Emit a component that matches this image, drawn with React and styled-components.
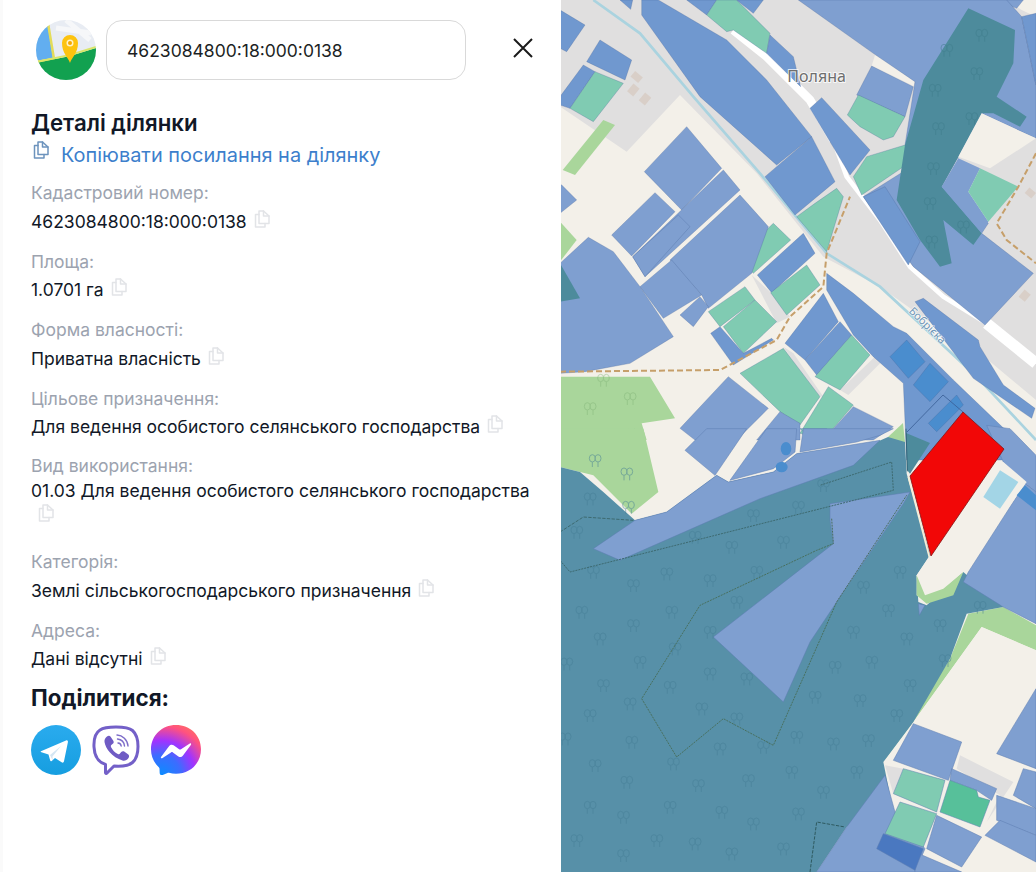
import React from 'react';
import styled, { createGlobalStyle } from 'styled-components';

const GlobalStyle = createGlobalStyle`
  html, body {
    margin: 0;
    padding: 0;
    background: #fff;
    font-family: Inter, "Noto Sans", sans-serif;
  }
`;

const Page = styled.div`
  display: flex;
  width: 1036px;
  height: 872px;
  overflow: hidden;
`;

const Panel = styled.aside`
  width: 561px;
  flex-shrink: 0;
  box-sizing: border-box;
  padding: 20px 27px 0 28px;
  border-left: 3px solid #fafafa;
`;

const Header = styled.div`
  display: flex;
  align-items: center;
  margin-bottom: 29px;
`;

const LogoWrap = styled.div`
  width: 60px;
  height: 60px;
  margin: 0 10px 0 5px;
  flex-shrink: 0;
`;

const SearchBox = styled.div`
  width: 360px;
  height: 60px;
  box-sizing: border-box;
  display: flex;
  align-items: center;
  padding-left: 20px;
  border: 1px solid #d9d9d9;
  border-radius: 16px;
  font-size: 17.5px;
  color: #1c1f24;
`;

const CloseButton = styled.button`
  margin: 0 0 4px 46px;
  padding: 0;
  width: 22px;
  height: 22px;
  border: none;
  background: none;
  color: #1a1a1a;
  display: flex;
`;

const Title = styled.h2`
  margin: 0;
  font-size: 22.25px;
  line-height: 28px;
  font-weight: 600;
  color: #111827;
`;

const CopyLink = styled.div`
  display: flex;
  align-items: flex-start;
  height: 33px;
  margin-top: 3px;
  margin-bottom: 6px;
  font-size: 19.95px;
  line-height: 30px;
  color: #3d7fcc;
`;

const LinkIcon = styled.span`
  width: 30px;
  color: #6c93bd;
  display: block;
  margin: -3px -2px 0 2px;
`;

const Field = styled.div`
  margin-bottom: ${p => (p.$wrapped ? '20px' : '14px')};
`;

const Label = styled.div`
  font-size: 17.5px;
  line-height: ${p => (p.$tight ? '25px' : '27px')};
  color: #9ca3af;
`;

const Value = styled.div`
  font-size: 17.5px;
  line-height: 25px;
  margin-top: ${p => (p.$tight ? '0' : '2.5px')};
  color: #111827;
`;

const CopyMark = styled.span`
  display: inline-block;
  vertical-align: 0;
  margin-left: 7px;
  color: #e2e4e7;
  height: 18px;
  line-height: 0;
`;

const ShareTitle = styled(Title)`
  margin-top: -1px;
  font-size: 22.4px;
  font-weight: 700;
`;

const ShareRow = styled.div`
  display: flex;
  align-items: center;
  gap: 11px;
  margin-top: 13px;
`;

const MapPane = styled.div`
  flex: 1;
  height: 872px;
  background: #f2efe9;
`;

const MapSvg = styled.svg`
  display: block;
  width: 475px;
  height: 872px;
`;

const PlaceName = styled.text`
  font-family: "Noto Sans", sans-serif;
  font-size: 48px;
  fill: #6e6e6e;
  stroke: rgba(255, 255, 255, 0.75);
  stroke-width: 6px;
  paint-order: stroke;
`;

const RiverName = styled.text`
  font-family: "Noto Sans", sans-serif;
  font-size: 33px;
  fill: #6f96b8;
  stroke: rgba(255, 255, 255, 0.7);
  stroke-width: 4px;
  paint-order: stroke;
`;

const BLUE = '#7098cf';
const LIGHT = '#7f9fd0';
const MINT = '#80cbb2';
const TEAL = '#5790a8';
const DEEP = '#4d8b9c';
const GRAY = '#e0dfdf';
const BEIGE = '#f3f0e9';
const GREEN = '#a9d69b';
const WATER = '#4a8dce';

const topShapes = [
  [GRAY, '0,0 1428,0 1428,1200 1260,1060 1100,960 960,860 790,770 590,520 360,285 200,455 0,320'],
  [GRAY, '575,825 635,880 690,950 650,970'],
  [GRAY, '945,1070 965,1085 865,1185 840,1170'],
  [GRAY, '670,1040 700,1060 790,1190 770,1185'],
  [BEIGE, '1340,0 1428,0 1428,50 1385,30'],
  [BEIGE, '945,165 1065,240 1060,262 935,198'],
  [GREEN, '130,360 165,375 45,525 8,510'],
  [GREEN, '0,665 50,720 0,785'],
  [GREEN, '0,1130 270,1130 345,1255 245,1270 260,1320 0,1320'],
];

const topParcels = [
  [BLUE, '0,30 75,75 20,155 0,145'],
  [BLUE, '120,120 215,180 195,240 80,185'],
  [BLUE, '70,195 105,215 30,325 0,315 0,290'],
  [MINT, '105,215 190,250 100,365 30,325'],
  [BLUE, '245,0 295,0 500,120 620,240 755,410 650,495 420,290 245,45'],
  [BLUE, '755,410 825,545 705,645 615,530'],
  [BLUE, '180,0 218,0 212,28'],
  [BLUE, '380,0 470,0 440,45'],
  [MINT, '470,0 530,0 630,100 620,160 520,90 500,95 440,45'],
  [BLUE, '630,105 700,170 722,260 620,160'],
  [BLUE, '530,0 610,0 580,40'],
  [LIGHT, '1310,0 1390,0 1370,25'],
  [LIGHT, '715,0 1340,0 1385,50 1428,255 1428,415 1265,340 1195,470 1145,560 1285,670 1265,700 1420,820 1275,975 1060,800 910,590 1070,490 1035,435 1065,245 940,160'],
  [BLUE, '910,590 975,560 1080,725 1045,795'],
  [BLUE, '1385,50 1428,40 1428,255'],
  [LIGHT, '935,198 1060,260 1035,350 890,285'],
  [MINT, '895,285 1035,350 1000,410 970,420 900,380 862,345'],
  [BLUE, '785,293 930,450 870,525 750,325'],
  [MINT, '1035,435 1060,480 905,585 880,530 920,470'],
  [MINT, '830,565 850,590 800,755 710,650 765,610'],
  [MINT, '640,670 692,720 580,820 535,770'],
  [BLUE, '730,700 765,760 635,878 592,825'],
  [MINT, '740,795 780,855 680,945 632,878'],
  [LIGHT, '380,380 485,505 365,630 253,515'],
  [LIGHT, '490,510 540,570 255,830 218,770'],
  [LIGHT, '285,578 345,635 215,768 155,705'],
  [LIGHT, '355,645 390,680 255,830 218,770'],
  [LIGHT, '540,585 625,680 575,820 445,925 425,885 330,780'],
  [LIGHT, '335,780 425,885 310,955 240,860'],
  [LIGHT, '420,890 445,920 400,980 360,945'],
  [LIGHT, '85,712 160,755 240,860 340,1010 210,1090 75,1115 0,1120 0,790'],
  [LIGHT, '0,550 50,600 0,640'],
  [MINT, '555,860 585,900 480,980 445,935'],
  [MINT, '585,900 650,965 550,1060 490,980'],
  [BLUE, '480,980 550,1060 635,1015 640,1020 520,1095 452,1000'],
  [BLUE, '790,880 835,965 735,1080 675,1030'],
  [BLUE, '840,965 875,1005 770,1125 735,1080'],
  [BLUE, '800,820 880,880 1000,980 1040,1000 1180,1140 1430,1380 1040,1380 1030,1150 940,1070 880,1005 800,870'],
  [MINT, '875,1005 930,1065 840,1170 765,1130'],
  [MINT, '670,1045 780,1190 720,1275 660,1235 540,1120'],
  [MINT, '805,1160 880,1215 790,1320 720,1300'],
  [LIGHT, '505,1130 625,1225 530,1320 405,1320 360,1285'],
  [LIGHT, '880,1220 1000,1280 940,1320 790,1320'],
  [LIGHT, '660,1235 720,1270 720,1320 590,1320'],
  [BLUE, '1065,905 1090,895 1255,1020 1260,1040 1330,1155 1425,1225 1415,1255 1240,1135'],
  [WATER, '1040,1020 1095,1085 1045,1135 990,1070'],
  [WATER, '1110,1090 1165,1145 1110,1205 1060,1155'],
  [WATER, '1190,1185 1210,1215 1130,1295 1105,1270'],
];

const topForest = '1225,25 1365,90 1360,190 1310,290 1400,350 1380,380 1300,340 1265,340 1195,470 1145,560 1265,700 1240,735 1150,660 1175,790 1140,800 1080,720 1010,600 1035,435 1090,240';

const topCovers = [
  [BEIGE, '1265,340 1428,415 1290,505 1195,470'],
  [LIGHT, '1195,475 1260,505 1225,575 1285,665 1265,700 1145,560'],
  [MINT, '1260,505 1375,560 1285,665 1225,575'],
  [DEEP, '0,790 60,895 0,905'],
];

const lowShapes = [
  [GREEN, '0,-10 250,-10 295,180 215,245 100,130 0,105'],
  [GREEN, '1225,545 1330,525 1428,580 1428,655 1265,585 1060,870 970,990 1170,680'],
  [BEIGE, '1265,585 1428,655 1428,1320 980,1320 970,990 1060,870'],
  [GRAY, '1200,970 1360,1050 1280,1170 1320,1090 1190,1010'],
  [GRAY, '975,1000 1030,1010 1000,1085'],
];

const lowParcels = [
  [LIGHT, '375,55 440,-10 560,-10 465,130'],
  [LIGHT, '510,145 620,-10 710,-10 705,60 640,110'],
  [MINT, '720,-10 800,-10 770,30'],
  [LIGHT, '720,60 730,-10 1000,-10 960,10 890,30'],
  [GREEN, '984,15 1029,-27 1035,30 1000,40'],
  [TEAL, '0,105 60,120 130,180 225,265 320,240 470,130 505,150 640,120 710,65 950,30 984,15 1035,30 1040,125 1110,370 1070,430 1075,510 1100,520 1210,420 1330,525 1220,545 1170,680 1060,870 970,990 990,1090 860,1185 770,1320 0,1320'],
  [LIGHT, '225,265 320,240 470,130 505,150 640,120 710,65 960,25 880,100 600,200 180,385 100,350'],
  [LIGHT, '810,215 1050,180 1030,215 830,510 750,630 670,810 460,615 820,335 810,265'],
  [DEEP, '1038,3 1110,33 1050,125 1041,114'],
  [LIGHT, '1280,-20 1350,-10 1428,70 1428,180 1395,155 1330,90'],
  [LIGHT, '1395,155 1428,180 1428,575 1330,525 1210,450 1225,420'],
  [BEIGE, '1330,90 1400,150 1210,420 1100,515 1070,490 1070,430 1110,370'],
  [GREEN, '1210,420 1180,490 1100,515 1070,490 1070,430 1095,490 1150,470'],
  [LIGHT, '1075,515 1095,520 1078,550'],
  [LIGHT, '1428,770 1428,1010 1310,965'],
  [LIGHT, '1060,875 1205,930 1165,1045 1000,985'],
  [LIGHT, '770,1320 860,1185 975,1030 1005,1140 1095,1250 1065,1320'],
  [LIGHT, '1175,1010 1310,1070 1295,1105 1250,1075 1170,1045'],
  [LIGHT, '1390,1010 1428,1020 1428,1130 1360,1090'],
  [LIGHT, '1310,1090 1428,1130 1428,1210 1310,1165'],
  [LIGHT, '1320,1165 1428,1210 1428,1290 1275,1210'],
  [LIGHT, '1130,1150 1265,1215 1205,1305 1100,1250'],
  [LIGHT, '1065,1260 1205,1320 1065,1320'],
  [MINT, '1030,1010 1155,1045 1130,1140 1000,1085'],
  [MINT, '1020,1110 1130,1145 1090,1245 975,1205'],
  ['#57c09a', '1170,1045 1250,1075 1255,1095 1290,1105 1260,1185 1140,1140'],
  ['#4a78c0', '970,1205 1090,1250 1065,1315 950,1250'],
];

const lowTrees = [
  [105, 85], [200, 125], [90, 200], [205, 225], [50, 300], [100, 420], [220, 460], [320, 425], [405, 315], [515, 345], [580, 250], [670, 330], [715, 225], [790, 160], [590, 420], [450, 445], [530, 510], [335, 540], [65, 540], [220, 580], [120, 620], [345, 650], [240, 690], [20, 695], [130, 760], [330, 765], [450, 725], [560, 740], [825, 705], [935, 690], [1050, 760], [765, 795], [900, 805], [1010, 850], [425, 830], [530, 860], [210, 815], [90, 850], [480, 950], [610, 945], [710, 915], [820, 935], [925, 925], [215, 930], [15, 920], [105, 1000], [340, 995], [200, 1050], [415, 1060], [565, 1045], [695, 1020], [790, 1080], [890, 1020], [90, 1125], [330, 1125], [190, 1155], [485, 1140], [715, 1145], [580, 1175], [50, 1225], [290, 1225], [405, 1235], [190, 1270], [515, 1265], [670, 1250], [985, 535], [880, 600], [1040, 620], [1140, 580], [1020, 420], [910, 465], [1260, 525], [1155, 685], [450, 600],
];

const topTrees = [
  [1265, 105, 'd'], [1160, 150, 'd'], [1250, 220, 'd'], [1125, 270, 'd'], [1235, 355, 'd'], [1135, 385, 'd'], [1120, 505, 'd'], [1110, 610, 'd'], [1210, 680, 'd'], [1115, 725, 'd'], [130, 1140, 'g'], [210, 1195, 'g'], [90, 1225, 'g'], [215, 1305, 'g'],
];

const Tree = ({ x, y, color }) => (
  <g transform={`translate(${x - 18} ${y - 18})`} fill="none" stroke={color} strokeWidth="3" opacity="0.5">
    <ellipse cx="10" cy="12" rx="9" ry="11" />
    <ellipse cx="27" cy="12" rx="9" ry="11" />
    <path d="M10 23v15M27 23v15" />
  </g>
);

const Shape = ({ fill, points, edge = '#3f5f96' }) => (
  <polygon points={points} fill={fill} stroke={edge} strokeWidth="2" strokeOpacity="0.4" />
);

function ParcelMap() {
  return (
    <MapSvg viewBox="3 0 1425 2616" aria-label="Карта">
      <rect x="0" y="0" width="1428" height="2616" fill={BEIGE} />
      {topShapes.map(([c, p]) => <polygon key={p} points={p} fill={c} />)}
      <rect x="215" y="220" width="30" height="22" transform="rotate(40 230 231)" fill="#d9cfc8" />
      <rect x="205" y="258" width="30" height="24" transform="rotate(-50 220 270)" fill="#d9cfc8" />
      <rect x="240" y="285" width="30" height="24" transform="rotate(-50 255 297)" fill="#d9cfc8" />
      <rect x="1380" y="875" width="28" height="24" transform="rotate(-50 1394 887)" fill="#d9cfc8" />
      <rect x="1398" y="568" width="26" height="22" transform="rotate(40 1411 579)" fill="#d9cfc8" />
      <polyline points="100,0 240,100 400,290 600,520 800,760 960,860 1100,990 1250,1130 1428,1320" fill="none" stroke="#aad3df" strokeWidth="8" />
      <polyline points="520,90 620,170 750,300 820,420" fill="none" stroke="#fff" strokeWidth="26" />
      <polyline points="820,420 860,530 960,660 1050,800 1150,890 1280,970" fill="none" stroke="#fff" strokeWidth="14" />
      <polyline points="1280,970 1428,1090" fill="none" stroke="#fff" strokeWidth="34" />
      {topParcels.map(([c, p]) => <Shape key={p} fill={c} points={p} />)}
      <polygon points={topForest} fill={DEEP} />
      {topCovers.map(([c, p]) => <polygon key={p} points={p} fill={c} />)}
      <polyline points="0,1115 480,1110 650,1020 690,950 790,860 800,760 870,590" fill="none" stroke="#c69f6a" strokeWidth="6" strokeDasharray="18 9" />
      <polyline points="1428,460 1375,560 1310,670 1340,720 1428,790" fill="none" stroke="#c69f6a" strokeWidth="6" strokeDasharray="18 9" />
      {topTrees.map(([x, y, k]) => <Tree key={`${x}-${y}`} x={x} y={y} color={k === 'd' ? '#3f7d8c' : '#86b87c'} />)}
      <PlaceName x="682" y="245">Поляна</PlaceName>
      <RiverName transform="translate(1045 935) rotate(45)">Бобрієка</RiverName>

      <g transform="translate(0 1296)">
        {lowShapes.map(([c, p]) => <polygon key={p} points={p} fill={c} />)}
        {lowParcels.map(([c, p]) => (
          <polygon key={p} points={p} fill={c} stroke={c === TEAL || c === BEIGE || c === GREEN || c === DEEP ? 'none' : '#5c7cb0'} strokeWidth="1.5" />
        ))}
        <polygon points="1320,115 1375,150 1320,230 1270,195" fill="#a3d5e6" />
        <polygon points="1370,190 1395,160 1428,190 1428,235" fill={WATER} />
        <ellipse cx="678" cy="50" rx="16" ry="20" fill={WATER} />
        <ellipse cx="665" cy="105" rx="18" ry="16" fill={WATER} />
        {lowTrees.map(([x, y]) => <Tree key={`${x}-${y}`} x={x} y={y} color="#467f97" />)}
        <polyline points="0,300 70,255 220,265" fill="none" stroke="#3d6a70" strokeWidth="3" strokeDasharray="10 4" />
        <polyline points="0,385 30,420 1000,175 995,90 780,160" fill="none" stroke="#3d6a70" strokeWidth="3" strokeDasharray="6 3" />
        <polyline points="815,260 820,335 770,355 420,520 245,800 350,975 490,860 640,940 830,510 1040,190" fill="none" stroke="#48705f" strokeWidth="3" strokeDasharray="6 3" />
        <polyline points="750,1320 770,1170 855,1185" fill="none" stroke="#2e5a60" strokeWidth="3" strokeDasharray="10 4" />
        <polyline points="1041,0 1149,-111 1209,-60" fill="none" stroke="#3a5f96" strokeWidth="2.500" />
        <polyline points="1038,-10 1042,118" fill="none" stroke="#2d5a70" strokeWidth="2.500" />
        <polygon points="1209,-60 1332,51 1113,372 1050,132" fill="#f20707" stroke="#8a1515" strokeWidth="2.500" />
        <polyline points="1045,135 1108,375" fill="none" stroke="#f6efd8" strokeWidth="5" />
      </g>
    </MapSvg>
  );
}

const Logo = () => (
  <svg viewBox="0 0 60 60" width="60" height="60">
    <defs>
      <clipPath id="logoClip"><circle cx="30" cy="30" r="30" /></clipPath>
    </defs>
    <g clipPath="url(#logoClip)">
      <rect width="60" height="60" fill="#e8ecf3" />
      <path d="M30 0l24 20M20 8l35 5" stroke="#f6f7f9" strokeWidth="5" fill="none" />
      <path d="M0 0h11l6 38-17 3z" fill="#62aef0" />
      <path d="M12 3l6 36L0 42" fill="none" stroke="#e3dc5a" strokeWidth="2.500" />
      <path d="M0 43l34-7 26-8v32H0z" fill="#12a150" />
      <path d="M0 42l34-7 26-8" fill="none" stroke="#d9e66a" strokeWidth="2" />
      <path d="M34 43c-2-6-8-10-8-20a8 8 0 0 1 16 0c0 10-6 14-8 20z" fill="#fdc30f" />
      <circle cx="34" cy="23" r="3.500" fill="#fff3c6" />
      <circle cx="34" cy="23" r="2" fill="#f6a800" />
    </g>
  </svg>
);

const CopyIcon = ({ size = 16 }) => (
  <svg viewBox="0 0 16 18" width={size} height={size * 1.125} fill="none" stroke="currentColor" strokeWidth="1.500" strokeLinejoin="round" strokeLinecap="round">
    <path d="M5 1h4.500L15 6v7.500H5z" />
    <path d="M9.500 1v5H15" />
    <path d="M5 4.500H1.500V17H11v-3.500" />
  </svg>
);

const Telegram = () => (
  <svg viewBox="0 0 50 50" width="50" height="50">
    <defs>
      <linearGradient id="tgGrad" x1="0.5" y1="0" x2="0.5" y2="1">
        <stop offset="0" stopColor="#2aabee" />
        <stop offset="1" stopColor="#169ee0" />
      </linearGradient>
    </defs>
    <circle cx="25" cy="25" r="25" fill="url(#tgGrad)" />
    <path d="M10.500 26L35 15.500c1.300-.5 2.200.2 1.900 1.800l-3.900 19c-.3 1.400-1.300 1.700-2.400 1L24 33l-3.300 3c-.6.600-1.300.4-1.500-.4L17.500 29.500l-7-2.200c-1.100-.4-1.100-.9 0-1.300z" fill="#fff" />
    <path d="M19 30l11-9-8.500 10.500.2 4z" fill="#d4e6f3" />
  </svg>
);

const Viber = () => (
  <svg viewBox="0 0 48 50" width="48" height="50">
    <path d="M24 2c7 0 13 .5 16.500 3.500C44.500 9 46 14 46 21.500s-1.500 12.500-5.500 16c-4 3.500-11 4-18.500 3.500l-7 7c-.8.800-1.500.4-1.500-.6v-8C7 37.500 2.500 32 2 22 1.500 12 4 7.500 8 5c3.500-2.500 9-3 16-3z" fill="#fff" stroke="#7360c8" strokeWidth="3" strokeLinejoin="round" />
    <path d="M15 11.500c1.500-1 3-.8 3.800.5l2.500 3.800c.8 1.200.4 2.300-.5 3l-1.500 1.200c-.6.500-.6 1.300-.2 2.200 1.500 3 3.700 5.200 6.700 6.700.9.400 1.700.3 2.200-.3l1.200-1.500c.8-.9 1.900-1.300 3-.5l3.800 2.600c1.300.9 1.400 2.400.5 3.700-1.500 2.200-3.800 3.300-6 2.600-5-1.500-9.700-4.500-13-8.500-2.500-3-4.500-6.500-5-10-.3-2.300 1-4.300 2.500-5.500z" fill="#6f5bc4" />
    <path d="M25 10c5.500.3 10.500 4.500 11 11M25.500 14c3.500.4 6.600 3 7 7M26 18c1.700.2 3 1.500 3.200 3" fill="none" stroke="#7d6cc9" strokeWidth="1.400" strokeLinecap="round" />
  </svg>
);

const Messenger = () => (
  <svg viewBox="0 0 50 50" width="50" height="50">
    <defs>
      <radialGradient id="msGrad" cx="0.2" cy="1" r="1.150">
        <stop offset="0" stopColor="#0a8cff" />
        <stop offset="0.35" stopColor="#3d6cff" />
        <stop offset="0.6" stopColor="#a033ff" />
        <stop offset="0.85" stopColor="#ff5280" />
        <stop offset="1" stopColor="#ff7061" />
      </radialGradient>
    </defs>
    <path d="M25 0C11 0 0 10.400 0 24.300c0 7.300 3 13.500 7.800 17.900.4.400.7 1 .7 1.600l.2 4.500c0 1.400 1.500 2.300 2.800 1.800l5-2.200c.4-.2.900-.2 1.400-.1 2.200.6 4.600 1 7.100 1 14 0 25-10.400 25-24.500S39 0 25 0z" fill="url(#msGrad)" />
    <path d="M10 32l8.200-11c1-1.400 3-1.700 4.400-.7l5.500 4c.6.400 1.300.4 1.900 0l8.800-5.800c.8-.5 1.700.4 1.200 1.200l-8.200 11c-1 1.400-3 1.700-4.400.7l-5.500-4c-.6-.4-1.300-.4-1.900 0l-8.800 5.800c-.8.500-1.700-.4-1.200-1.200z" fill="#fff" />
  </svg>
);

const fields = [
  { label: 'Кадастровий номер:', value: '4623084800:18:000:0138' },
  { label: 'Площа:', value: '1.0701 га' },
  { label: 'Форма власності:', value: 'Приватна власність' },
  { label: 'Цільове призначення:', value: 'Для ведення особистого селянського господарства' },
  { label: 'Вид використання:', value: '01.03 Для ведення особистого селянського господарства', wrapped: true },
  { label: 'Категорія:', value: 'Землі сільськогосподарського призначення' },
  { label: 'Адреса:', value: 'Дані відсутні' },
];

export default function App() {
  return (
    <Page>
      <GlobalStyle />
      <Panel>
        <Header>
          <LogoWrap><Logo /></LogoWrap>
          <SearchBox>4623084800:18:000:0138</SearchBox>
          <CloseButton aria-label="Закрити">
            <svg viewBox="0 0 22 22" width="22" height="22" stroke="currentColor" strokeWidth="2" fill="none">
              <path d="M2 2l18 18M20 2L2 20" />
            </svg>
          </CloseButton>
        </Header>
        <Title>Деталі ділянки</Title>
        <CopyLink>
          <LinkIcon><CopyIcon /></LinkIcon>
          Копіювати посилання на ділянку
        </CopyLink>
        {fields.map(f => (
          <Field key={f.label} $wrapped={f.wrapped}>
            <Label $tight={f.wrapped}>{f.label}</Label>
            <Value $tight={f.wrapped}>
              {f.value}
              <CopyMark><CopyIcon /></CopyMark>
            </Value>
          </Field>
        ))}
        <ShareTitle>Поділитися:</ShareTitle>
        <ShareRow>
          <Telegram />
          <Viber />
          <Messenger />
        </ShareRow>
      </Panel>
      <MapPane><ParcelMap /></MapPane>
    </Page>
  );
}
